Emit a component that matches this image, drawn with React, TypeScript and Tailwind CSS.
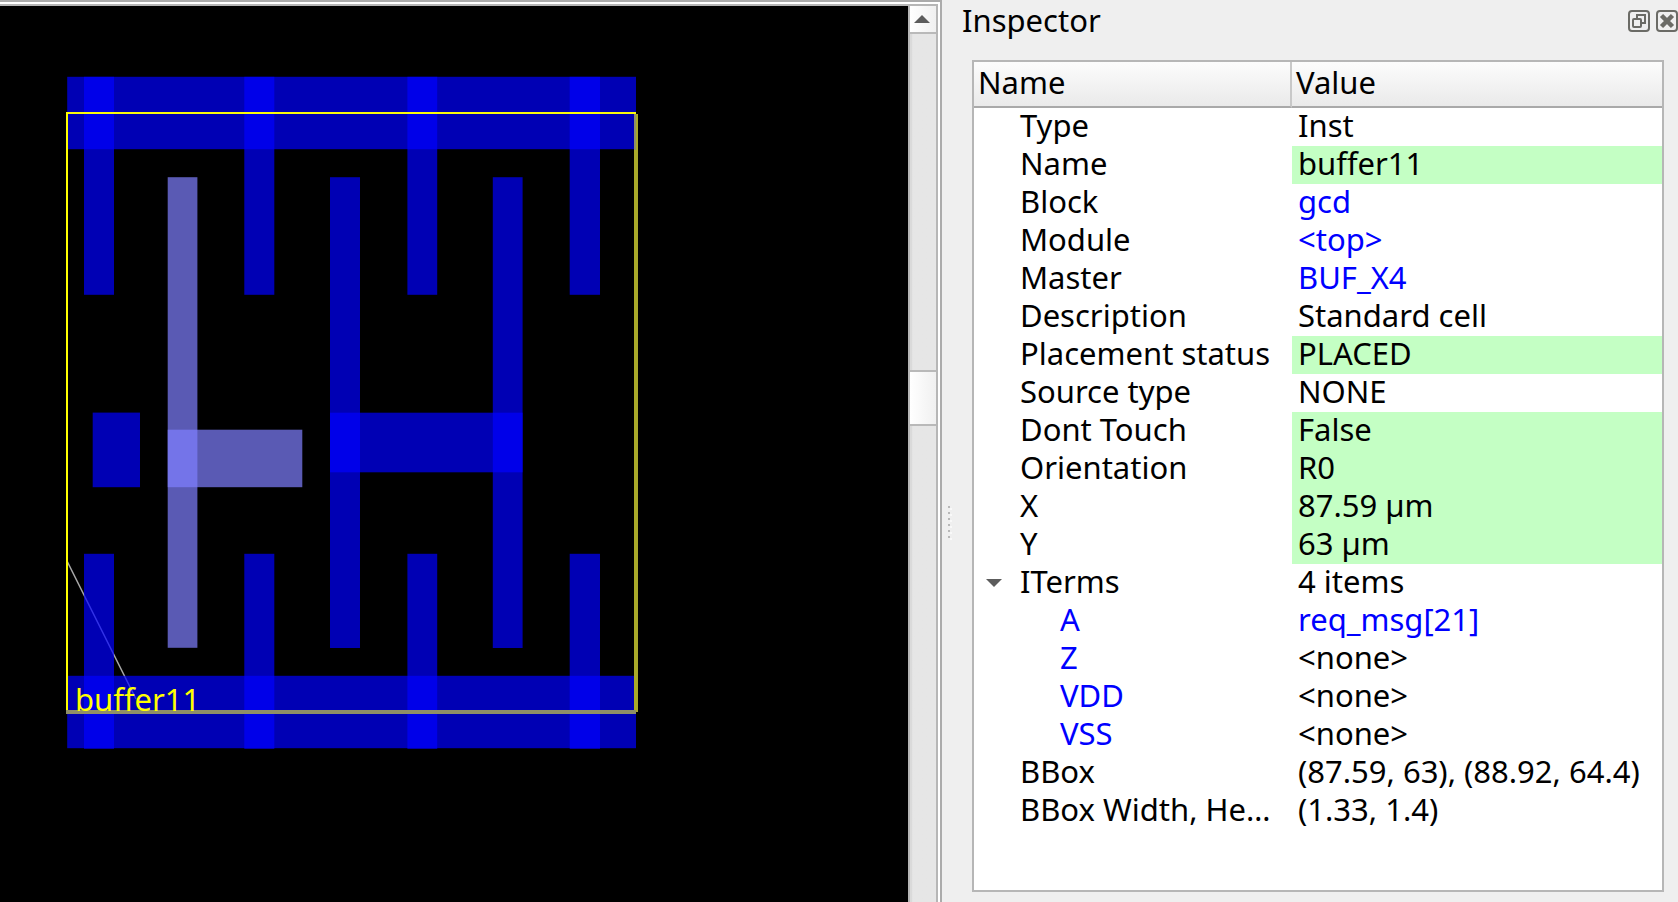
import { useState } from "react";

type Box = { x1: number; x2: number; y1: number; y2: number; selected?: boolean };

const strapColumns = [
  [84, 114],
  [244.3, 274.3],
  [407.4, 437.2],
  [569.7, 600],
];

const metal: Box[] = [
  { x1: 67.2, x2: 636, y1: 76.8, y2: 149.2 },
  { x1: 67.2, x2: 636, y1: 675.8, y2: 748.2 },
  ...strapColumns.map(([x1, x2]) => ({ x1, x2, y1: 76.8, y2: 294.8 })),
  ...strapColumns.map(([x1, x2]) => ({ x1, x2, y1: 553.8, y2: 748.8 })),
  { x1: 330, x2: 360, y1: 177.2, y2: 648 },
  { x1: 492.8, x2: 522.6, y1: 177.2, y2: 648 },
  { x1: 330, x2: 522.6, y1: 412.7, y2: 472.3 },
  { x1: 92.7, x2: 140, y1: 412.6, y2: 487.2 },
  { x1: 167.7, x2: 197.4, y1: 177.2, y2: 647.8, selected: true },
  { x1: 167.7, x2: 302.3, y1: 429.7, y2: 487.2, selected: true },
];

function LayoutView() {
  return (
    <svg width="908" height="896" viewBox="0 6 908 896" className="block shrink-0" role="img" aria-label="Cell layout">
      <line x1="67" y1="561" x2="136" y2="699" stroke="#a8a8a8" strokeWidth="1.6" />
      {metal.map((m, i) => (
        <rect
          key={i}
          x={m.x1}
          y={m.y1}
          width={m.x2 - m.x1}
          height={m.y2 - m.y1}
          fill={m.selected ? "#8080ff" : "#0000ff"}
          fillOpacity="0.706"
        />
      ))}
      <rect x="66" y="112" width="570" height="2" fill="#fbfb0a" />
      <rect x="66" y="112" width="2" height="600" fill="#ffff00" />
      <rect x="634" y="114" width="4" height="598" fill="#a9a929" />
      <rect x="634" y="114" width="2" height="36" fill="#8f8f68" />
      <rect x="66" y="710" width="570" height="4" fill="#8f8f68" />
      <text x="75" y="711" fill="#ffff00" fontSize="31" fontFamily='"Noto Sans", sans-serif'>
        buffer11
      </text>
    </svg>
  );
}

function ScrollBar() {
  return (
    <div className="flex w-[30px] shrink-0 flex-col border-x-2 border-[#b6b6b6] bg-linear-to-r from-[#dadada] from-8% to-[#e6e6e6] to-10%">
      <button
        type="button"
        aria-label="Scroll up"
        className="flex h-7 items-center justify-center border-b-2 border-[#b9b9b9] bg-linear-to-r from-white to-[#f0f0f0]"
      >
        <svg width="16" height="8" viewBox="0 0 16 8" className="-ml-0.5">
          <path d="M8 0L16 8H0Z" fill="#5c5c5c" />
        </svg>
      </button>
      <div className="flex-336" />
      <div className="h-14 border-y-2 border-[#b9b9b9] bg-linear-to-r from-white to-[#f0f0f0]" />
      <div className="flex-476" />
    </div>
  );
}

type Row = { name: string; value: string; link?: boolean; editable?: boolean; child?: boolean; parent?: boolean };

const rows: Row[] = [
  { name: "Type", value: "Inst" },
  { name: "Name", value: "buffer11", editable: true },
  { name: "Block", value: "gcd", link: true },
  { name: "Module", value: "<top>", link: true },
  { name: "Master", value: "BUF_X4", link: true },
  { name: "Description", value: "Standard cell" },
  { name: "Placement status", value: "PLACED", editable: true },
  { name: "Source type", value: "NONE" },
  { name: "Dont Touch", value: "False", editable: true },
  { name: "Orientation", value: "R0", editable: true },
  { name: "X", value: "87.59 µm", editable: true },
  { name: "Y", value: "63 µm", editable: true },
  { name: "ITerms", value: "4 items", parent: true },
  { name: "A", value: "req_msg[21]", link: true, child: true },
  { name: "Z", value: "<none>", child: true },
  { name: "VDD", value: "<none>", child: true },
  { name: "VSS", value: "<none>", child: true },
  { name: "BBox", value: "(87.59, 63), (88.92, 64.4)" },
  { name: "BBox Width, He…", value: "(1.33, 1.4)" },
];

function NameCell({ row, open, onToggle }: { row: Row; open: boolean; onToggle: () => void }) {
  if (row.parent) {
    return (
      <div className="flex">
        <button
          type="button"
          aria-label={`Toggle ${row.name}`}
          aria-expanded={open}
          onClick={onToggle}
          className="flex w-[46px] items-center pt-1 pl-3"
        >
          <svg width="16" height="8" viewBox="0 0 16 8">
            <path d="M0 0H16L8 8Z" fill="#5c5c5c" />
          </svg>
        </button>
        {row.name}
      </div>
    );
  }
  if (row.child) {
    return (
      <div className="pl-[86px]">
        <a href="#" className="text-[#0000ff]">
          {row.name}
        </a>
      </div>
    );
  }
  return <div className="pl-[46px] whitespace-nowrap">{row.name}</div>;
}

function PropertyTable() {
  const [open, setOpen] = useState(true);
  return (
    <table className="w-full table-fixed border-separate border-spacing-0">
      <colgroup>
        <col className="w-[318px]" />
        <col />
      </colgroup>
      <thead>
        <tr className="bg-linear-to-b from-[#fcfcfc] to-[#e9e9e9] text-left">
          <th className="h-[46px] border-r-2 border-b-2 border-r-[#c8c8c8] border-b-[#a9a9a9] pt-0 pb-1 pl-1 font-normal">
            Name
          </th>
          <th className="border-b-2 border-[#a9a9a9] pt-0 pb-1 pl-1 font-normal">Value</th>
        </tr>
      </thead>
      <tbody className="leading-[34px]">
        {rows
          .filter((r) => open || !r.child)
          .map((r) => (
            <tr key={r.name} className="h-[38px] align-top">
              <td className="p-0">
                <NameCell row={r} open={open} onToggle={() => setOpen(!open)} />
              </td>
              <td className={r.editable ? "bg-[#c4ffc4] py-0 pr-0 pl-1.5" : "py-0 pr-0 pl-1.5"}>
                {r.link ? (
                  <a href="#" className="text-[#0000ff]">
                    {r.value}
                  </a>
                ) : (
                  r.value
                )}
              </td>
            </tr>
          ))}
      </tbody>
    </table>
  );
}

function DockButtons() {
  return (
    <div className="flex gap-1.5 pt-0.5">
      <button type="button" aria-label="Float">
        <svg width="22" height="22" viewBox="0 0 22 22" fill="none" stroke="#6b6b66" strokeWidth="2">
          <rect x="1" y="1" width="20" height="20" rx="3" />
          <path d="M9 8V5H17V13H14" />
          <rect x="5" y="9" width="8" height="8" rx="1" />
        </svg>
      </button>
      <button type="button" aria-label="Close">
        <svg width="22" height="22" viewBox="0 0 22 22" fill="none" stroke="#6b6b66" strokeWidth="2">
          <rect x="1" y="1" width="20" height="20" rx="3" />
          <path d="M5.500 5.500L16.500 16.500M16.500 5.500L5.500 16.500" strokeWidth="4.500" />
        </svg>
      </button>
    </div>
  );
}

export default function App() {
  return (
    <div className="flex min-h-screen bg-[#efefef] font-['Noto_Sans',sans-serif] text-[31px] leading-[38px] text-black">
      <main className="flex min-w-0 flex-1 flex-col border-t-2 border-r-2 border-[#ababab]">
        <div className="flex flex-1 border-t-2 border-r-2 border-white">
          <div className="flex min-w-0 flex-1 border-t-2 border-[#b6b6b6]">
            <div className="flex min-w-0 flex-1 overflow-hidden bg-black">
              <LayoutView />
            </div>
            <ScrollBar />
          </div>
        </div>
      </main>
      <div className="flex w-4 shrink-0 flex-col gap-1 pt-[506px] pl-1.5">
        {[0, 1, 2, 3, 4, 5].map((i) => (
          <span key={i} className="size-0.5 bg-[#b8b8b8] shadow-[2px_2px_0_#f9f9f9]" />
        ))}
      </div>
      <aside className="flex w-[720px] shrink-0 flex-col">
        <header className="flex h-10 items-center justify-between pl-1">
          <h1>Inspector</h1>
          <DockButtons />
        </header>
        <section className="mt-5 mr-3.5 mb-2.5 ml-3.5 flex-1 border-2 border-[#b6b6b6] bg-white">
          <PropertyTable />
        </section>
      </aside>
    </div>
  );
}
